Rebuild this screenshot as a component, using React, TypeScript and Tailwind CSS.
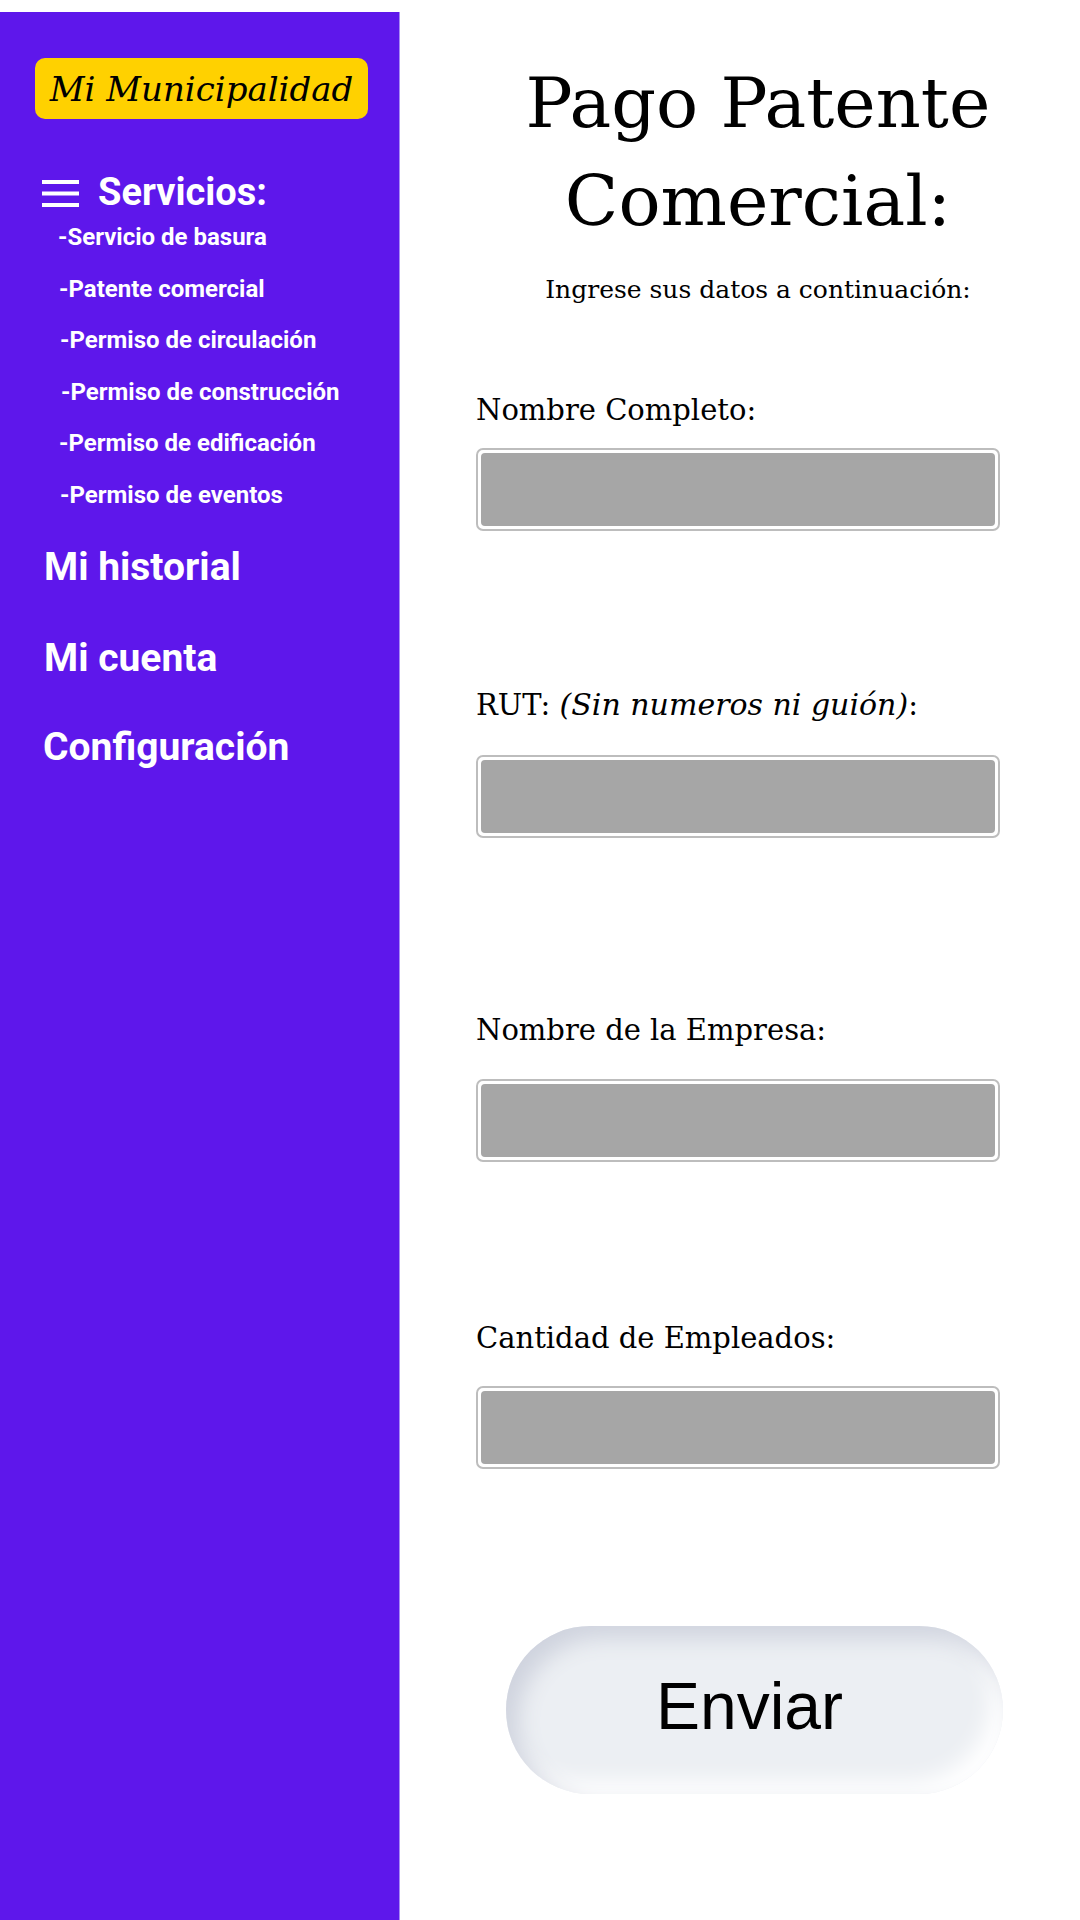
import { ReactNode } from 'react';

const servicios = [
  { label: '-Servicio de basura', cls: 'pl-[58px]' },
  { label: '-Patente comercial', cls: 'pl-[59px]' },
  { label: '-Permiso de circulación', cls: 'pl-[60px]' },
  { label: '-Permiso de construcción', cls: 'pl-[61px]' },
  { label: '-Permiso de edificación', cls: 'pl-[59px]' },
  { label: '-Permiso de eventos', cls: 'pl-[60px]' },
];

function Campo({ label, labelCls, inputCls }: { label: ReactNode; labelCls: string; inputCls: string }) {
  return (
    <>
      <label className={`ml-[76px] text-[29px] leading-[34px] text-black ${labelCls}`}>{label}</label>
      <div className={`ml-[76px] w-[524px] h-[83px] rounded-[7px] border-2 border-[#bdbdbd] bg-white p-[3px] ${inputCls}`}>
        <div className="w-full h-full rounded-[4px] bg-[#a6a6a6]" />
      </div>
    </>
  );
}

export default function App() {
  return (
    <div className="w-[1080px] h-[1920px] flex bg-white overflow-hidden">
      {/* Sidebar */}
      <aside className="mt-[12px] w-[400px] shrink-0 bg-[#5e17eb] border-r border-[#a88bf4] flex flex-col text-white font-['Roboto',sans-serif] font-bold">
        <div className="mt-[46px] ml-[35px] w-[333px] h-[61px] rounded-[10px] bg-[#ffd100] flex items-center justify-center">
          <span className="font-['DejaVu_Serif',serif] italic font-normal text-[34px] text-black leading-none">Mi Municipalidad</span>
        </div>

        <div className="mt-[53px] flex items-center">
          <svg className="ml-[42px] mt-[3px]" width="37" height="27" viewBox="0 0 37 27">
            <rect x="0" y="0" width="37" height="4" fill="white" />
            <rect x="0" y="11.5" width="37" height="4" fill="white" />
            <rect x="0" y="23" width="37" height="4" fill="white" />
          </svg>
          <span className="ml-[19px] text-[38px] leading-[40px]">Servicios:</span>
        </div>

        <ul className="text-[24px] leading-[51.5px]">
          {servicios.map((s) => (
            <li key={s.label} className={s.cls}>{s.label}</li>
          ))}
        </ul>

        <nav className="flex flex-col text-[39px] leading-[44px] pl-[44px]">
          <a className="mt-[24px]">Mi historial</a>
          <a className="mt-[47px]">Mi cuenta</a>
          <a className="mt-[45px] -ml-[1px]">Configuración</a>
        </nav>
      </aside>

      {/* Formulario */}
      <main className="flex-1 flex flex-col font-['DejaVu_Serif',serif] text-black">
        <h1 className="mt-[54px] pl-[36px] text-center text-[70px] leading-[98px] font-normal">
          Pago Patente
          <br />
          Comercial:
        </h1>
        <p className="mt-[25px] pl-[36px] text-center text-[25px] leading-[30px]">Ingrese sus datos a continuación:</p>

        <Campo label="Nombre Completo:" labelCls="mt-[88px]" inputCls="mt-[21px]" />
        <Campo
          label={
            <>
              RUT: <i className="text-[30px]">(Sin numeros ni guión)</i>:
            </>
          }
          labelCls="mt-[157px]"
          inputCls="mt-[33px]"
        />
        <Campo label="Nombre de la Empresa:" labelCls="mt-[175px]" inputCls="mt-[32px]" />
        <Campo label="Cantidad de Empleados:" labelCls="mt-[159px]" inputCls="mt-[31px]" />

        <button className="mt-[157px] ml-[106px] w-[497px] h-[168px] rounded-full bg-[#eceff3] shadow-[inset_12px_12px_22px_#cfd3de,inset_-12px_-12px_22px_#ffffff] flex items-center justify-center pr-[10px] pb-[8px]">
          <span className="font-['Liberation_Sans',Arial,sans-serif] text-[66px] leading-none text-black">Enviar</span>
        </button>
      </main>
    </div>
  );
}
